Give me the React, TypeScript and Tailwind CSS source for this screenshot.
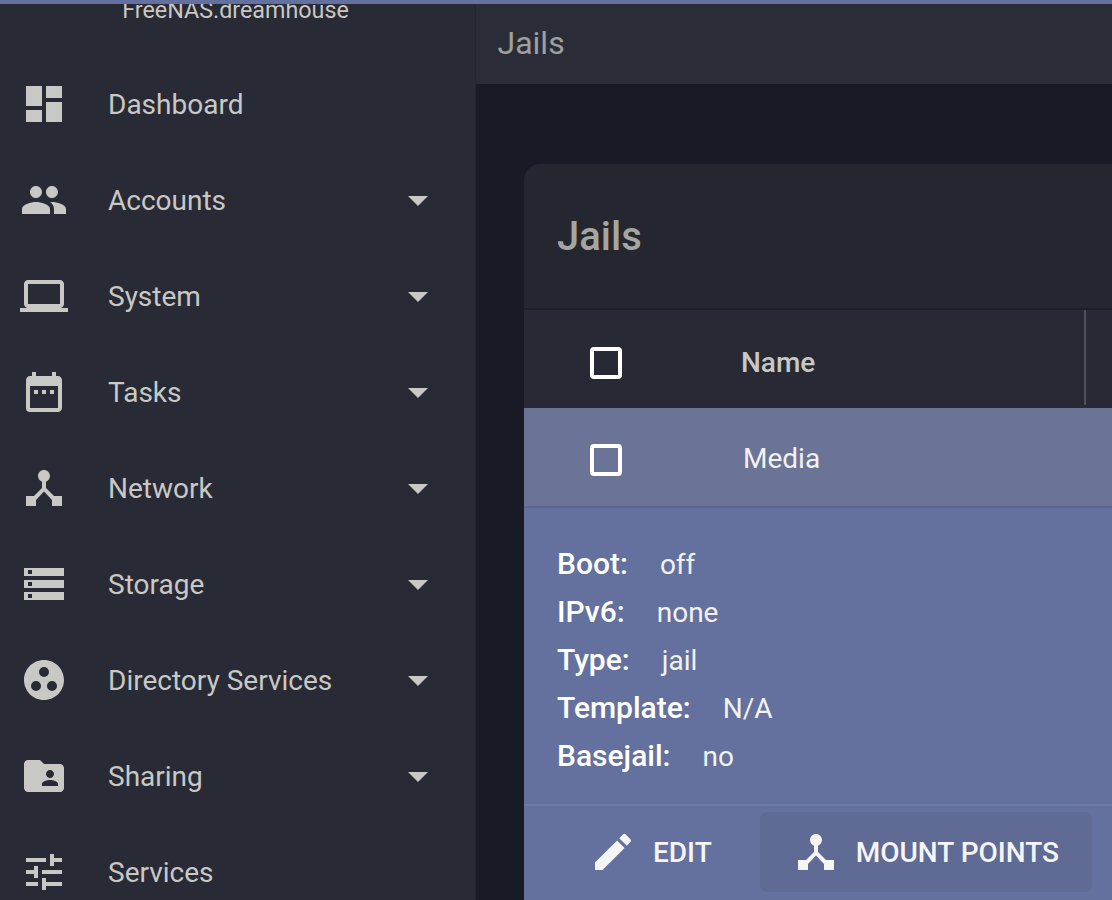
import type { ReactNode } from 'react';
import {
  MdArrowDropDown,
  MdDashboard,
  MdDateRange,
  MdDeviceHub,
  MdEdit,
  MdFolderShared,
  MdGroupWork,
  MdLaptop,
  MdPeople,
  MdStorage,
  MdTune,
} from 'react-icons/md';

interface NavItem {
  label: string;
  icon: ReactNode;
  caret?: boolean;
}

const navItems: NavItem[] = [
  { label: 'Dashboard', icon: <MdDashboard size={48} /> },
  { label: 'Accounts', icon: <MdPeople size={48} />, caret: true },
  { label: 'System', icon: <MdLaptop size={48} />, caret: true },
  { label: 'Tasks', icon: <MdDateRange size={48} />, caret: true },
  { label: 'Network', icon: <MdDeviceHub size={48} />, caret: true },
  { label: 'Storage', icon: <MdStorage size={48} />, caret: true },
  { label: 'Directory Services', icon: <MdGroupWork size={48} />, caret: true },
  { label: 'Sharing', icon: <MdFolderShared size={48} />, caret: true },
  { label: 'Services', icon: <MdTune size={48} /> },
];

const details = [
  { label: 'Boot:', value: 'off' },
  { label: 'IPv6:', value: 'none' },
  { label: 'Type:', value: 'jail' },
  { label: 'Template:', value: 'N/A' },
  { label: 'Basejail:', value: 'no' },
];

const Checkbox = () => (
  <div className="h-[32px] w-[32px] shrink-0 rounded-[4px] border-[4px] border-white" />
);

const App = () => {
  return (
    <div className="flex h-[900px] w-[1112px] flex-col overflow-hidden bg-[#181a25] font-['Roboto',sans-serif]">
      <div className="h-[4px] shrink-0 bg-[#6370a0]" />
      <div className="flex min-h-0 flex-1">
        <aside className="w-[476px] shrink-0 overflow-hidden border-r border-[#23252f] bg-[#282a35] text-[#c8c8c4]">
          <div className="h-[52px] overflow-hidden text-center text-[23.3px] leading-[32px]">
            <div className="mt-[-10px] pr-[4px]">FreeNAS.dreamhouse</div>
          </div>
          {navItems.map((item) => (
            <div key={item.label} className="flex h-[96px] items-center pl-[20px] pr-[33px]">
              {item.icon}
              <span className="ml-[40px] mt-[2px] flex-1 text-[28px] leading-[40px]">{item.label}</span>
              {item.caret && <MdArrowDropDown size={48} />}
            </div>
          ))}
        </aside>

        <main className="min-w-0 flex-1 overflow-hidden">
          <header className="flex h-[80px] items-center bg-[#2a2d38] pb-[2px] pl-[21.5px] text-[32px] text-[#a0a09c]">
            Jails
          </header>
          <div className="w-[700px] pl-[48px] pt-[80px]">
            <section className="w-[652px] overflow-hidden rounded-t-[16px] bg-[#24272f]">
              <div className="flex h-[144px] items-center pl-[33px] pt-[2px] text-[40px] font-medium text-[#a6a6a1]">
                Jails
              </div>
              <div className="flex h-[100px] border-t-2 border-[#1c1e28] bg-[#272a35]">
                <div className="flex h-[95px] w-[562px] items-center border-r-2 border-[#4e505a] pl-[66px] pt-[10px]">
                  <Checkbox />
                  <span className="ml-[119px] text-[28px] font-medium text-[#c8c8c4]">Name</span>
                </div>
              </div>
              <div className="flex h-[100px] items-center border-b-2 border-[#5f6688] bg-[#6b7396] pl-[66px] pt-[6px]">
                <Checkbox />
                <span className="ml-[121px] mt-[-2px] text-[28px] text-[#f2f2f2]">Media</span>
              </div>
              <div className="bg-[#64719e] text-white">
                <div className="border-b-2 border-[#6d7aa6] pb-[24px] pl-[33px] pt-[32px]">
                  {details.map((row) => (
                    <div key={row.label} className="flex h-[48px] items-baseline">
                      <span className="text-[30px] font-medium leading-[48px]">{row.label}</span>
                      <span className="ml-[32px] text-[28px] text-[#f2f2f2]">{row.value}</span>
                    </div>
                  ))}
                </div>
                <div className="flex items-start gap-[16px] pb-[8px] pl-[33px] pt-[6px]">
                  <div className="flex h-[80px] items-center gap-[16px] rounded-[8px] px-[32px] text-[28px] font-medium text-[#f5f5f5]">
                    <MdEdit size={48} />
                    <span className="mt-[2px]">EDIT</span>
                  </div>
                  <div className="flex h-[80px] items-center gap-[16px] rounded-[8px] bg-[#5f6a95] pl-[32px] pr-[33px] text-[28px] font-medium text-[#f5f5f5]">
                    <MdDeviceHub size={48} />
                    <span className="mt-[2px]">MOUNT POINTS</span>
                  </div>
                </div>
              </div>
            </section>
          </div>
        </main>
      </div>
    </div>
  );
};

export default App;
